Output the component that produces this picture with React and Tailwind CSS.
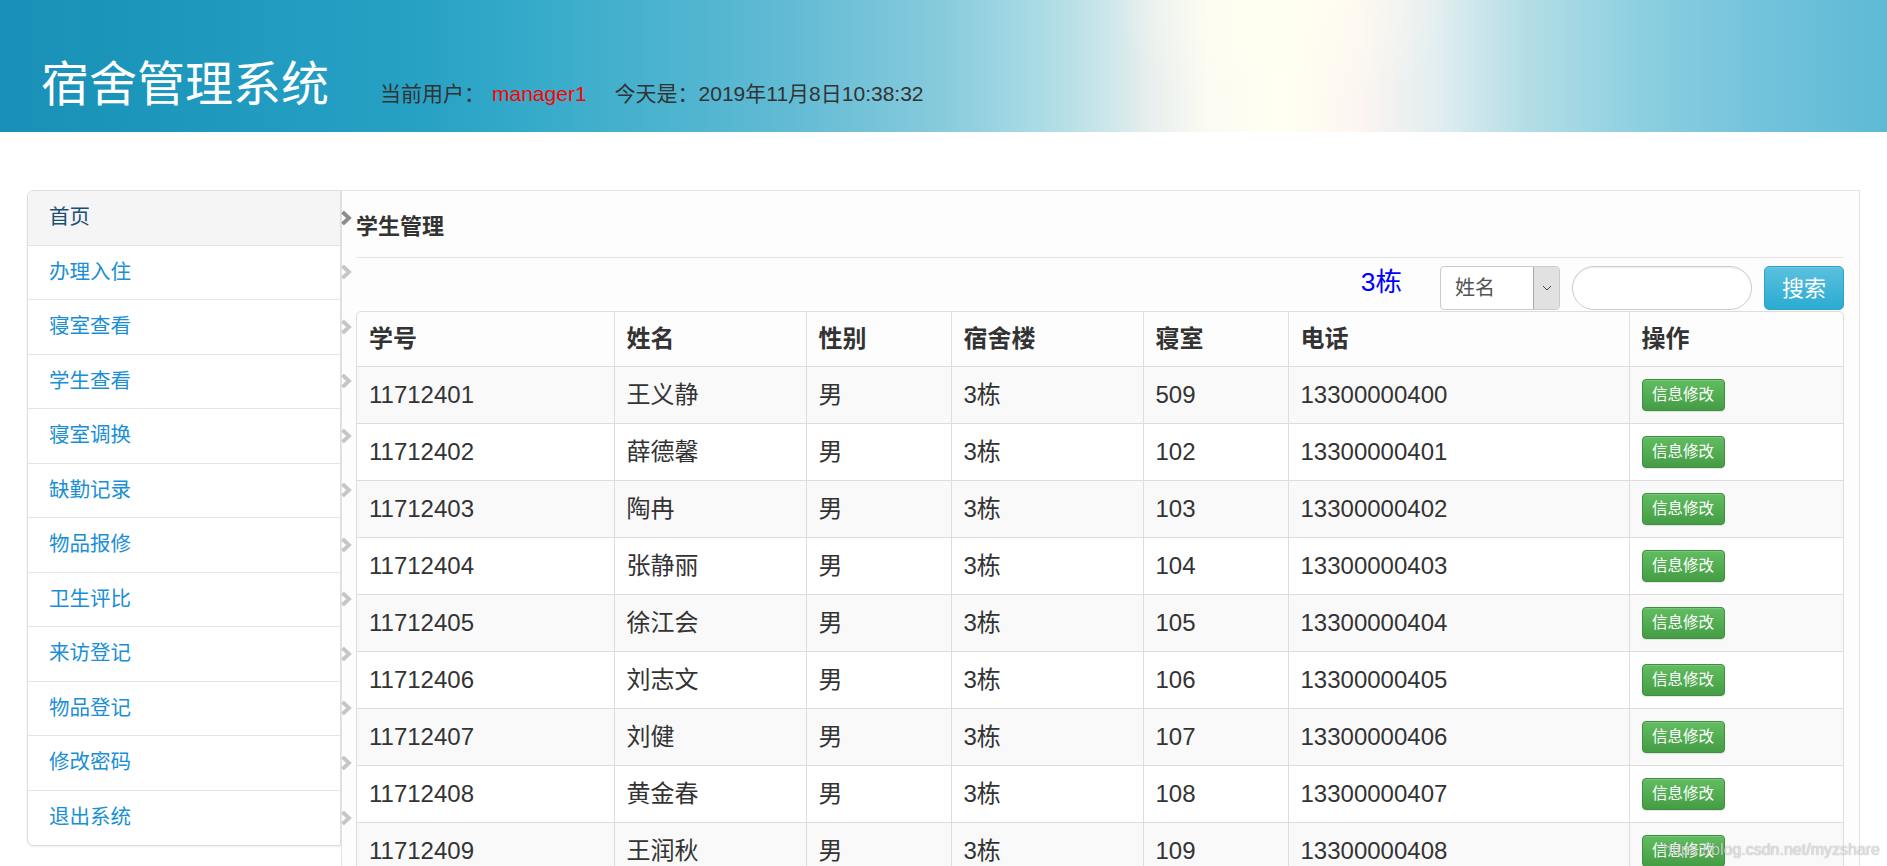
import React from "react";

const menu = [
  "首页",
  "办理入住",
  "寝室查看",
  "学生查看",
  "寝室调换",
  "缺勤记录",
  "物品报修",
  "卫生评比",
  "来访登记",
  "物品登记",
  "修改密码",
  "退出系统",
];

const students = [
  ["11712401", "王义静", "男", "3栋", "509", "13300000400"],
  ["11712402", "薛德馨", "男", "3栋", "102", "13300000401"],
  ["11712403", "陶冉", "男", "3栋", "103", "13300000402"],
  ["11712404", "张静丽", "男", "3栋", "104", "13300000403"],
  ["11712405", "徐江会", "男", "3栋", "105", "13300000404"],
  ["11712406", "刘志文", "男", "3栋", "106", "13300000405"],
  ["11712407", "刘健", "男", "3栋", "107", "13300000406"],
  ["11712408", "黄金春", "男", "3栋", "108", "13300000407"],
  ["11712409", "王润秋", "男", "3栋", "109", "13300000408"],
];

const columns = ["学号", "姓名", "性别", "宿舍楼", "寝室", "电话", "操作"];
const widths = ["w-[257px]", "w-[192px]", "w-[145px]", "w-[192px]", "w-[145px]", "w-[341px]", ""];

function Chevron({ dark }) {
  return (
    <svg width="12" height="15" viewBox="0 0 12 15" className="absolute -right-[12px] top-1/2 -translate-y-1/2 z-10">
      <polyline
        points="2.5,1.5 9,7.5 2.5,13.5"
        fill="none"
        stroke={dark ? "#8c8c8c" : "#c6c6c6"}
        strokeWidth="3.8"
      />
    </svg>
  );
}

function Sidebar() {
  return (
    <aside className="w-[314px] shrink-0 self-start bg-white border border-[#dddddd] rounded-l-[7px] shadow-[0_1px_2px_rgba(0,0,0,0.08)]">
      {menu.map((item, i) => (
        <div
          key={item}
          className={`relative h-[54.5px] flex items-center pl-[21px] text-[20.5px] ${
            i < menu.length - 1 ? "border-b border-[#e5e5e5]" : ""
          } ${i === 0 ? "bg-[#f5f5f5] text-[#1d4e78] rounded-tl-[7px]" : "text-[#1a8fd5]"}`}
        >
          {item}
          <Chevron dark={i === 0} />
        </div>
      ))}
    </aside>
  );
}

function Toolbar() {
  return (
    <div className="flex justify-end items-center h-[44px] mt-[8px]">
      <span className="self-start leading-[32px] text-[26.5px] text-[#0000ff]">3栋</span>
      <div className="ml-[38px] w-[120px] h-[44px] flex border border-[#cccccc] rounded-[4px] bg-white overflow-hidden">
        <span className="flex-1 flex items-center pl-[14px] text-[20px] text-[#555555]">姓名</span>
        <span className="w-[26px] flex items-center justify-center bg-[#e1e1e1] border-l border-[#aaaaaa]">
          <svg width="10" height="6" viewBox="0 0 10 6">
            <polyline points="1,1 5,5 9,1" fill="none" stroke="#444" strokeWidth="1" />
          </svg>
        </span>
      </div>
      <div className="ml-[12px] w-[180px] h-[44px] rounded-full border border-[#cccccc] bg-white shadow-[inset_0_1px_1px_rgba(0,0,0,0.075)]" />
      <button className="ml-[12px] w-[80px] h-[44px] rounded-[5px] border border-[#28a4c9] bg-[linear-gradient(#5bc0de,#2aabd2)] text-white text-[22px] shadow-[inset_0_1px_0_rgba(255,255,255,0.15)]">
        搜索
      </button>
    </div>
  );
}

function StudentTable() {
  return (
    <div className="mt-[1px] border border-[#dddddd] rounded-t-[5px] overflow-hidden">
      <table className="w-full table-fixed border-collapse text-[#333333]">
        <colgroup>
          {widths.map((w, i) => (
            <col key={i} className={w} />
          ))}
        </colgroup>
        <thead>
          <tr className="h-[54px]">
            {columns.map((c, i) => (
              <th
                key={c}
                className={`text-left font-bold text-[24px] px-[12px] ${i > 0 ? "border-l border-[#dddddd]" : ""}`}
              >
                {c}
              </th>
            ))}
          </tr>
        </thead>
        <tbody>
          {students.map((row, r) => (
            <tr key={row[0]} className={`h-[57px] ${r % 2 === 0 ? "bg-[#f9f9f9]" : "bg-white"}`}>
              {row.map((cell, i) => (
                <td
                  key={i}
                  className={`text-[24px] px-[12px] border-t border-[#dddddd] ${i > 0 ? "border-l" : ""}`}
                >
                  {cell}
                </td>
              ))}
              <td className="px-[12px] border-t border-l border-[#dddddd]">
                <button className="w-[83px] h-[32px] rounded-[4px] border border-[#3e8f3e] bg-[linear-gradient(#62bd62,#449d44)] text-white text-[15.5px] shadow-[inset_0_1px_0_rgba(255,255,255,0.15),0_1px_1px_rgba(0,0,0,0.1)]">
                  信息修改
                </button>
              </td>
            </tr>
          ))}
        </tbody>
      </table>
    </div>
  );
}

export default function App() {
  return (
    <div className="relative h-screen overflow-hidden bg-white font-['Liberation_Sans','Noto_Sans_CJK_SC',sans-serif]">
      {/* Header */}
      <header className="h-[132px] flex items-baseline pl-[41px] pt-[61px] bg-[radial-gradient(ellipse_9%_90%_at_68%_0%,rgba(255,255,240,0.7),rgba(255,255,240,0)),linear-gradient(90deg,#1890b7_0%,#26a1c4_22%,#3badcb_30%,#62bbd4_42%,#88cbdd_50%,#a9dbe5_55%,#c5e4e9_58%,#e8efee_61%,#fbfbf2_64%,#fffff2_68%,#fdf5f1_72%,#e3eef0_76%,#b3dde6_81%,#8ccfe0_87%,#74c3dc_93%,#5dbad5_100%)]">
        <h1 className="text-[48px] leading-none text-white font-normal">宿舍管理系统</h1>
        <div className="ml-[51px] text-[21px] text-[#333333]">
          当前用户：
          <span className="ml-[7px] text-[#ff0000]">manager1</span>
          <span className="ml-[28px]">今天是：2019年11月8日10:38:32</span>
        </div>
      </header>

      {/* Main */}
      <main className="flex px-[27px] pt-[58px]">
        <Sidebar />
        <section className="flex-1 min-h-[700px] border border-[#e3e3e3] bg-[#fdfdfd] pl-[14px] pr-[15px]">
          <h2 className="pt-[21px] text-[22px] leading-[30px] font-bold text-[#333333]">学生管理</h2>
          <div className="mt-[15px] border-t border-[#e5e5e5]" />
          <Toolbar />
          <StudentTable />
        </section>
      </main>

      {/* watermark */}
      <div className="absolute left-[1663px] top-[838px] text-[16px] text-white/70 [text-shadow:0_0_1px_rgba(0,0,0,0.45)]">
        https://blog.csdn.net/myzshare
      </div>
    </div>
  );
}
